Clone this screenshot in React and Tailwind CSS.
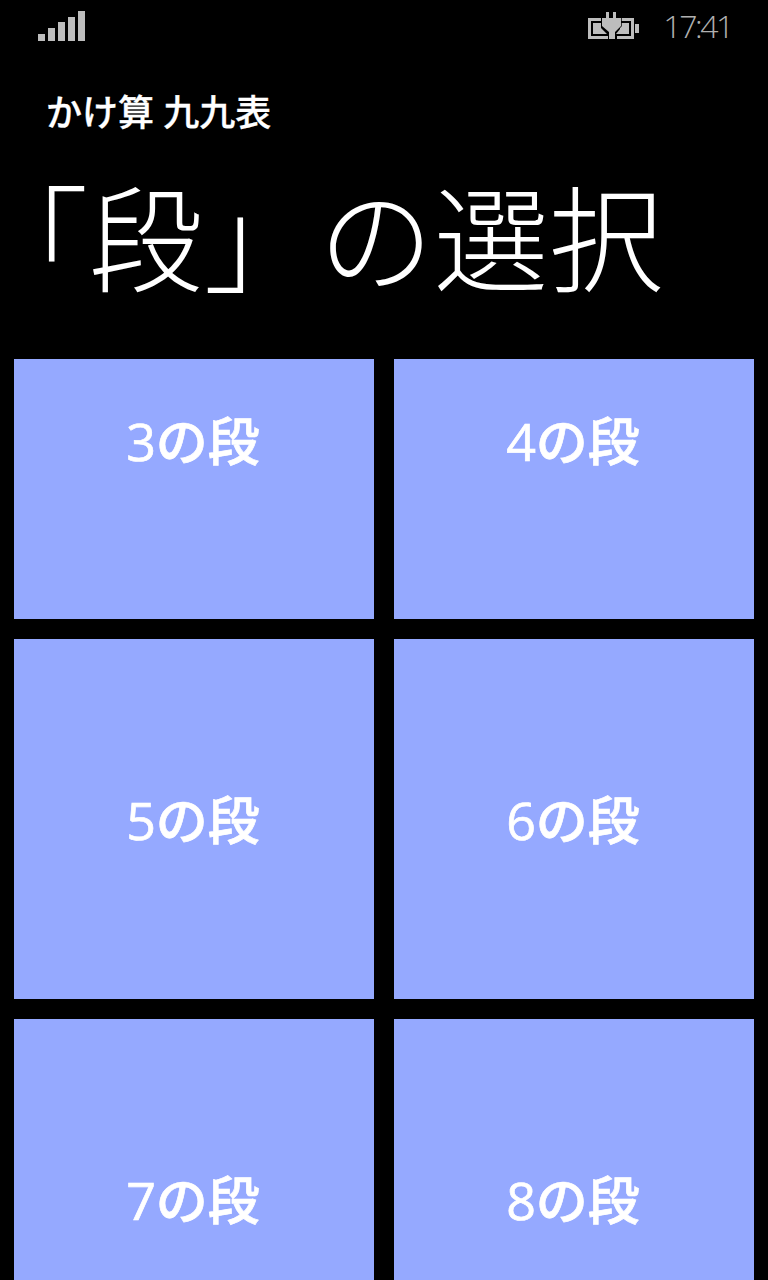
const cjk = "font-['Open_Sans','Noto_Sans_CJK_JP',sans-serif]";

function Signal() {
  return (
    <svg width="47" height="30" viewBox="0 0 47 30" className="mt-[11px] ml-[38px] block">
      <rect x="0" y="23" width="7" height="7" fill="#bdbdbd" />
      <rect x="10" y="17" width="7" height="13" fill="#bdbdbd" />
      <rect x="20" y="11" width="7" height="19" fill="#bdbdbd" />
      <rect x="30" y="6" width="7" height="24" fill="#bdbdbd" />
      <rect x="40" y="0" width="7" height="30" fill="#bdbdbd" />
    </svg>
  );
}

function Battery() {
  return (
    <svg width="51" height="27" viewBox="0 0 51 27" className="block">
      <path d="M0 6H13V9H3V24H20V27H0Z" fill="#bdbdbd" />
      <path d="M30 6H46V27H29V24H43V9H30Z" fill="#bdbdbd" />
      <path d="M5 11H13V16L19 22H5Z" fill="#bdbdbd" />
      <path d="M32 11H41V22H28L32 17Z" fill="#bdbdbd" />
      <path d="M18 0H21V6H25V0H28V6H33V14L27 20V27H21V20L14 14V6H18Z" fill="#bdbdbd" stroke="#000" strokeWidth="1.5" paintOrder="stroke" />
      <rect x="47" y="12" width="4" height="9" fill="#bdbdbd" />
    </svg>
  );
}

function Tile({ label, className = "" }) {
  return (
    <button className={`flex w-[360px] items-center justify-center bg-[#95a9ff] pr-[2px] text-[52px] font-medium leading-none text-white [-webkit-text-stroke:0.7px_white] ${cjk} ${className}`}>
      {label}
    </button>
  );
}

export default function App() {
  return (
    <div className={`flex h-[1280px] w-[768px] flex-col overflow-hidden bg-black text-white ${cjk}`}>
      <div className="flex h-[53px] items-start justify-between">
        <Signal />
        <div className="mr-[36px] flex items-start gap-[24px] pt-[12px]">
          <Battery />
          <span className="mt-[-2px] font-['Open_Sans',sans-serif] text-[32px] font-light leading-[32px] tracking-[-2.4px] text-[#b0b0b0]">17:41</span>
        </div>
      </div>
      <h2 className="ml-[46px] mt-[47px] text-[36px] font-medium leading-[48px] [-webkit-text-stroke:0.3px_white]">かけ算 九九表</h2>
      <h1 className="ml-[31px] mt-[32px] whitespace-nowrap text-[115px] font-light leading-[140px]">
        <span className="[font-feature-settings:'halt']">「</span>段」の選択
      </h1>
      <div className="mt-[50px] grid grid-cols-[360px_360px] gap-[20px] pl-[14px]">
        <Tile label="3の段" className="h-[260px] pb-[96px]" />
        <Tile label="4の段" className="h-[260px] pb-[96px]" />
        <Tile label="5の段" className="h-[360px] pt-[2px]" />
        <Tile label="6の段" className="h-[360px] pt-[2px]" />
        <Tile label="7の段" className="h-[360px] pt-[2px]" />
        <Tile label="8の段" className="h-[360px] pt-[2px]" />
      </div>
    </div>
  );
}
